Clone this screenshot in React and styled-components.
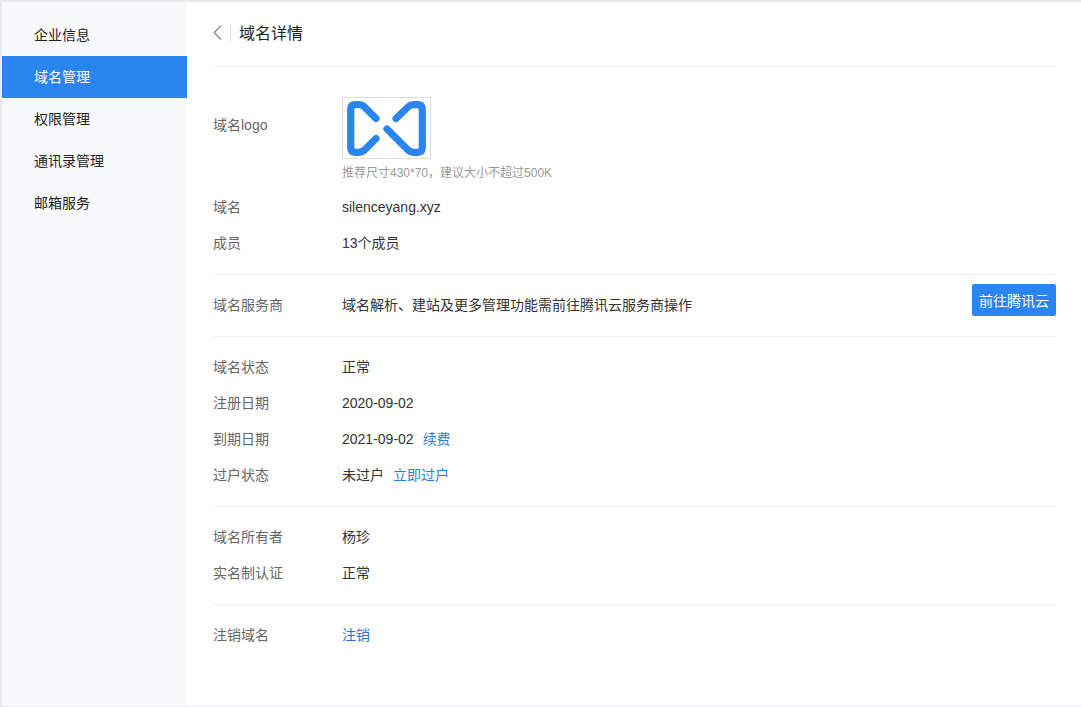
import React from 'react'
import styled, { createGlobalStyle } from 'styled-components'

const GlobalStyle = createGlobalStyle`
  html, body {
    margin: 0;
    height: 100%;
    background: #e9eaec;
  }
  body {
    font-family: "Liberation Sans", "Noto Sans CJK SC", sans-serif;
    font-size: 14px;
    color: #333;
  }
`

const menuItems = ['企业信息', '域名管理', '权限管理', '通讯录管理', '邮箱服务']

const Logo = () => (
  <svg width="87" height="60" viewBox="0 0 87 60" fill="none">
    <g stroke="#2b85f1" strokeWidth="7.2" strokeLinecap="round" strokeLinejoin="round">
      <path d="M33 20.500 L21.500 9 Q19 6.700 16 6.700 L12.500 6.700 Q7.700 6.700 7.700 11.500 L7.700 49.500 Q7.700 54.300 12.500 54.300 L16 54.300 Q19 54.300 21.500 52 L33 40.500" />
      <path d="M53 20.500 L65 9 Q67.500 6.700 70.500 6.700 L74.500 6.700 Q79.300 6.700 79.300 11.500 L79.300 49.500 Q79.300 54.300 74.500 54.300 L70.500 54.300 Q67.500 54.300 65 52 L44 31" />
    </g>
  </svg>
)

const App = () => (
  <>
    <GlobalStyle />
    <Panel>
      <Sidebar>
        {menuItems.map(item => (
          <MenuItem key={item} $active={item === '域名管理'}>{item}</MenuItem>
        ))}
      </Sidebar>

      <Main>
        <Header>
          <BackIcon width="10" height="15" viewBox="0 0 10 15" fill="none">
            <path d="M8 0.500 L1.200 7.500 L8 14.500" stroke="#8a8a8a" strokeWidth="1.300" />
          </BackIcon>
          <Title>域名详情</Title>
        </Header>

        <LogoSection>
          <LogoRow>
            <LogoLabel>域名logo</LogoLabel>
            <div>
              <LogoBox><Logo /></LogoBox>
              <Hint>推荐尺寸430*70，建议大小不超过500K</Hint>
            </div>
          </LogoRow>
          <Row>
            <Label>域名</Label>
            <Value>silenceyang.xyz</Value>
          </Row>
          <Row>
            <Label>成员</Label>
            <Value>13个成员</Value>
          </Row>
        </LogoSection>

        <ProviderSection>
          <Label>域名服务商</Label>
          <Value>域名解析、建站及更多管理功能需前往腾讯云服务商操作</Value>
          <PrimaryButton>前往腾讯云</PrimaryButton>
        </ProviderSection>

        <Section>
          <Row>
            <Label>域名状态</Label>
            <Value>正常</Value>
          </Row>
          <Row>
            <Label>注册日期</Label>
            <Value>2020-09-02</Value>
          </Row>
          <Row>
            <Label>到期日期</Label>
            <Value>2021-09-02</Value>
            <ActionLink href="#">续费</ActionLink>
          </Row>
          <Row>
            <Label>过户状态</Label>
            <Value>未过户</Value>
            <ActionLink href="#">立即过户</ActionLink>
          </Row>
        </Section>

        <Section>
          <Row>
            <Label>域名所有者</Label>
            <Value>杨珍</Value>
          </Row>
          <Row>
            <Label>实名制认证</Label>
            <Value>正常</Value>
          </Row>
        </Section>

        <LastSection>
          <Row>
            <Label>注销域名</Label>
            <CancelLink href="#">注销</CancelLink>
          </Row>
        </LastSection>
      </Main>
    </Panel>
  </>
)

export default App

const Panel = styled.div`
  display: flex;
  box-sizing: border-box;
  height: 704px;
  margin: 2px 0 1px 2px;
  background: #fff;
  border-radius: 2px 0 0 2px;
  overflow: hidden;
`

const Sidebar = styled.nav`
  flex: 0 0 185px;
  padding-top: 12px;
  background: #f8f9fb;
`

const MenuItem = styled.div`
  height: 42px;
  line-height: 42px;
  padding-left: 32px;
  color: ${({ $active }) => ($active ? '#fff' : '#222')};
  background: ${({ $active }) => ($active ? '#2b85f1' : 'transparent')};
`

const Main = styled.main`
  flex: 1;
  min-width: 0;
  padding: 0 25px 0 26px;
`

const Header = styled.header`
  display: flex;
  align-items: center;
  box-sizing: border-box;
  height: 65px;
  padding-bottom: 3px;
  border-bottom: 1px solid #eeeff1;
`

const BackIcon = styled.svg`
  display: block;
  margin-right: 7px;
`

const Title = styled.h1`
  margin: 0;
  padding: 2px 0 0 8px;
  border-left: 1px solid #dcdee2;
  font-size: 16px;
  font-weight: 400;
  line-height: 16px;
  color: #222;
`

const Section = styled.section`
  padding: 12px 0 13px;
  border-bottom: 1px solid #eeeff1;
`

const LogoSection = styled(Section)`
  padding-top: 30px;
`

const LastSection = styled(Section)`
  border-bottom: 0;
`

const ProviderSection = styled(Section)`
  display: flex;
  align-items: center;
  height: 62px;
  box-sizing: border-box;
  padding: 0 0 1px;
`

const Row = styled.div`
  display: flex;
  height: 36px;
  line-height: 36px;
`

const LogoRow = styled.div`
  display: flex;
  align-items: flex-start;
  height: 92px;
`

const Label = styled.div`
  flex: 0 0 129px;
  line-height: 36px;
  color: #666;
`

const LogoLabel = styled(Label)`
  line-height: 56px;
`

const Value = styled.div`
  line-height: 36px;
  color: #333;
`

const LogoBox = styled.div`
  box-sizing: border-box;
  width: 89px;
  height: 62px;
  padding: 0;
  border: 1px solid #ddd;
`

const Hint = styled.div`
  margin-top: 6px;
  font-size: 12px;
  line-height: 16px;
  color: #999;
`

const ActionLink = styled.a`
  margin-left: 9px;
  color: #2b7fe0;
  text-decoration: none;
`

const CancelLink = styled.a`
  color: #2b6fe0;
  text-decoration: none;
`

const PrimaryButton = styled.button`
  box-sizing: border-box;
  width: 84px;
  height: 32px;
  margin: -10px 0 0 auto;
  padding: 0;
  border: 0;
  border-radius: 2px;
  background: #2b85f1;
  color: #fff;
  font: inherit;
  cursor: pointer;
`
